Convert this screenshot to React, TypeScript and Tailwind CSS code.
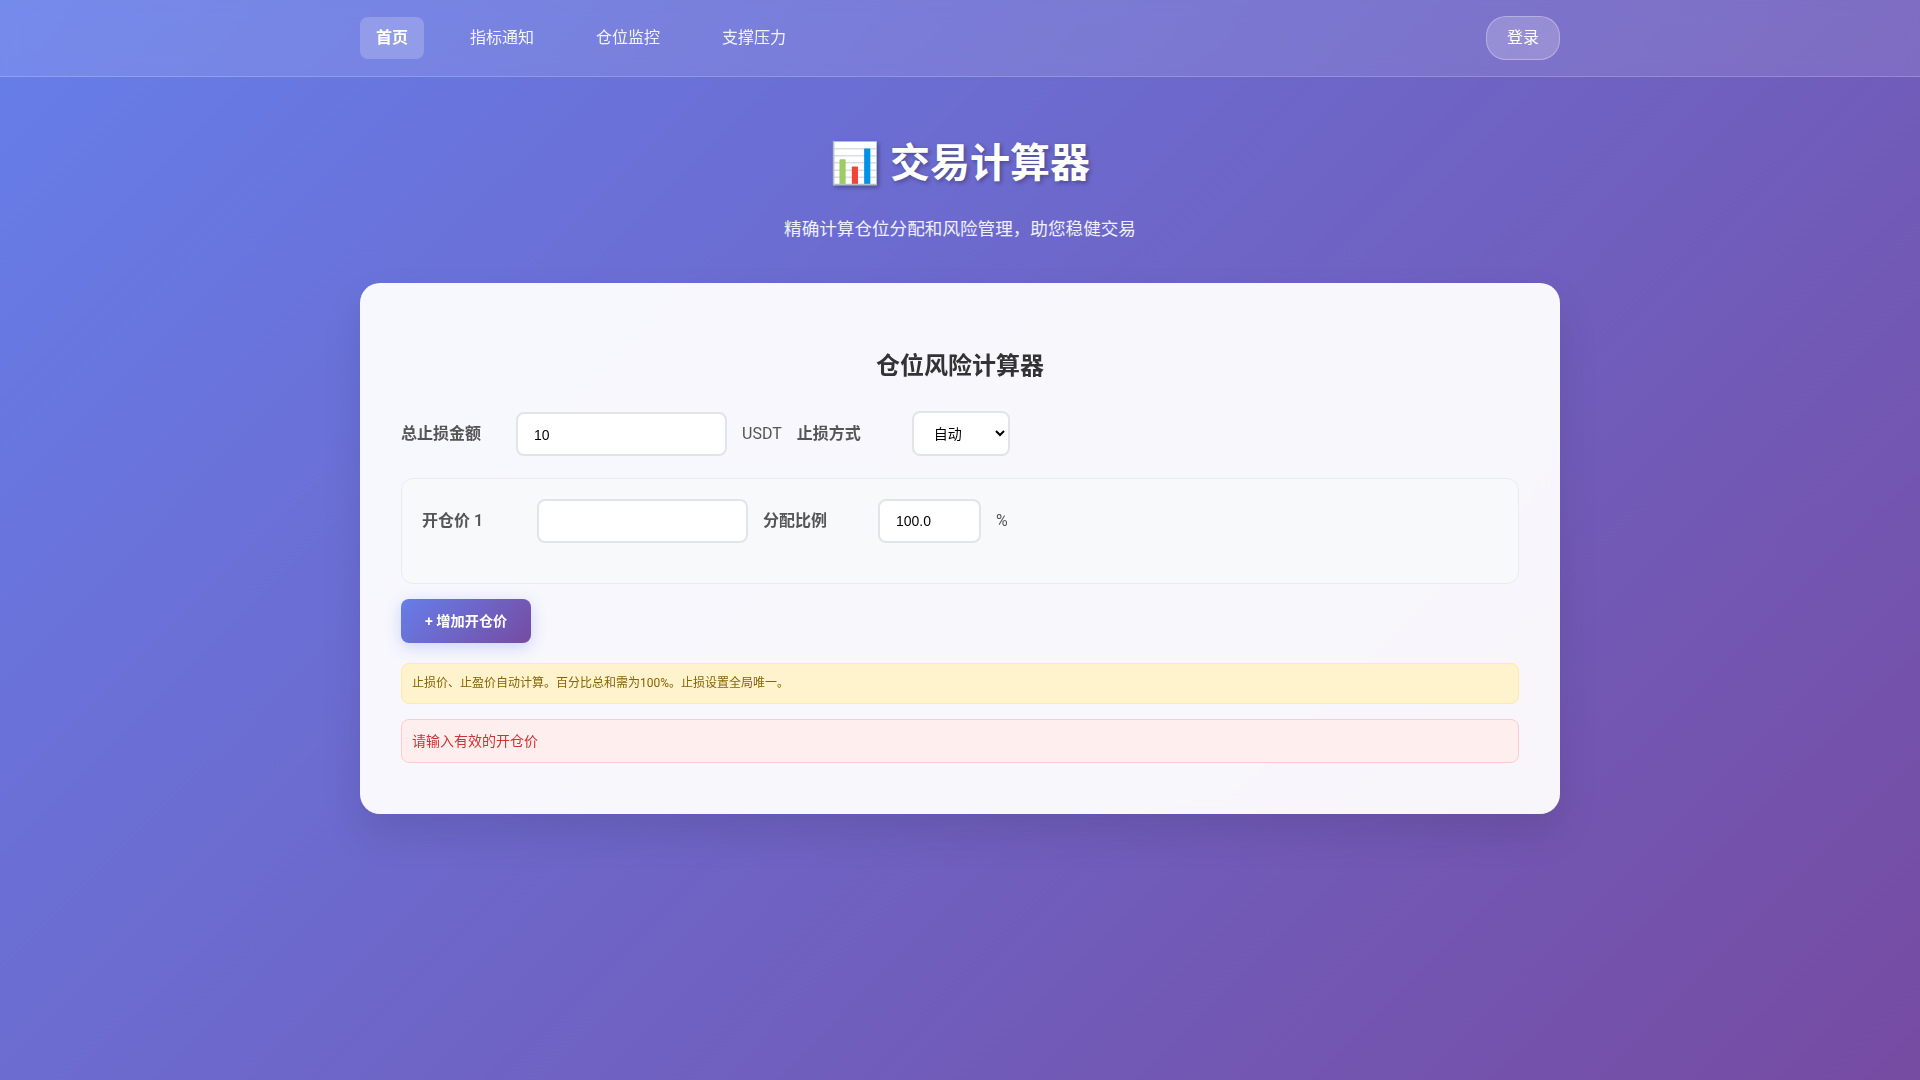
const font = "font-['Roboto','Noto_Sans_CJK_SC',sans-serif]";

function NavLink({ label, active }: { label: string; active?: boolean }) {
  return (
    <a
      className={
        active
          ? "rounded-lg bg-white/20 px-4 py-2 text-base leading-[26px] font-semibold text-white"
          : "rounded-lg px-4 py-2 text-base leading-[26px] text-white/90"
      }
    >
      {label}
    </a>
  );
}

function FieldLabel({ children }: { children: React.ReactNode }) {
  return <label className="w-[100px] shrink-0 text-base leading-[26px] font-semibold text-[#555]">{children}</label>;
}

const inputClass =
  "h-[44px] rounded-lg border-2 border-[#e1e5e9] bg-white px-4 font-['Liberation_Sans','Noto_Sans_CJK_SC',sans-serif] text-sm text-black outline-none";

export default function App() {
  return (
    <div className={`${font} min-h-[1080px] bg-[linear-gradient(135deg,#667eea_0%,#764ba2_100%)]`}>
      <nav className="h-[77px] border-b border-white/20 bg-white/10 backdrop-blur-[10px]">
        <div className="mx-auto flex h-[76px] w-[1200px] items-center justify-between">
          <div className="flex items-center gap-[30px]">
            <NavLink label="首页" active />
            <NavLink label="指标通知" />
            <NavLink label="仓位监控" />
            <NavLink label="支撑压力" />
          </div>
          <button className="h-[44px] rounded-[20px] border border-white/30 bg-white/20 px-5 text-base text-white">
            登录
          </button>
        </div>
      </nav>

      <header className="pt-[55px] text-center text-white">
        <h1 className="text-[40px] leading-[64px] font-bold [text-shadow:2px_2px_4px_rgba(0,0,0,0.3)]">📊 交易计算器</h1>
        <p className="mt-[19px] text-[17.6px] leading-[28px] text-white/90">精确计算仓位分配和风险管理，助您稳健交易</p>
      </header>

      <main className="mx-auto mt-[40px] w-[1200px] rounded-[20px] bg-white/95 px-[41px] pt-[64px] pb-[51px] shadow-[0_20px_40px_rgba(0,0,0,0.1)] backdrop-blur-[10px]">
        <h2 className="mb-[26px] text-center text-2xl leading-[38px] font-bold text-[#333]">仓位风险计算器</h2>

        <div className="mb-[22px] flex items-center gap-[15px]">
          <FieldLabel>总止损金额</FieldLabel>
          <input className={`${inputClass} w-[211px] pt-0.5`} defaultValue="10" />
          <span className="text-base text-[#555]">USDT</span>
          <div className="flex items-center gap-[15px]">
            <FieldLabel>止损方式</FieldLabel>
            <select className="h-[45px] w-[98px] rounded-lg border-2 border-[#e1e5e9] bg-white px-4 text-sm text-black outline-none">
              <option>自动</option>
              <option>手动</option>
            </select>
          </div>
        </div>

        <div className="mb-[15px] rounded-xl border border-[#e9ecef] bg-[#f8f9fa] px-5 pt-5 pb-10">
          <div className="flex items-center gap-[15px]">
            <FieldLabel>开仓价 1</FieldLabel>
            <input className={`${inputClass} w-[211px]`} />
            <FieldLabel>分配比例</FieldLabel>
            <input className={`${inputClass} w-[103px]`} defaultValue="100.0" />
            <span className="text-base text-[#555]">%</span>
          </div>
        </div>

        <button className="h-[44px] rounded-lg bg-[linear-gradient(135deg,#667eea_0%,#764ba2_100%)] px-6 pt-[2px] text-[14.2px] font-semibold text-white shadow-[0_4px_15px_rgba(102,126,234,0.3)]">
          + 增加开仓价
        </button>

        <div className="mt-5 rounded-lg border border-[#ffeaa7] bg-[#fff3cd] px-2.5 py-2.5 text-xs leading-[19px] text-[#856404]">
          止损价、止盈价自动计算。百分比总和需为100%。止损设置全局唯一。
        </div>
        <div className="mt-[15px] rounded-lg border border-[#fcc] bg-[#fee] px-2.5 py-2.5 text-sm leading-[22px] text-[#c33]">
          请输入有效的开仓价
        </div>
      </main>
    </div>
  );
}
